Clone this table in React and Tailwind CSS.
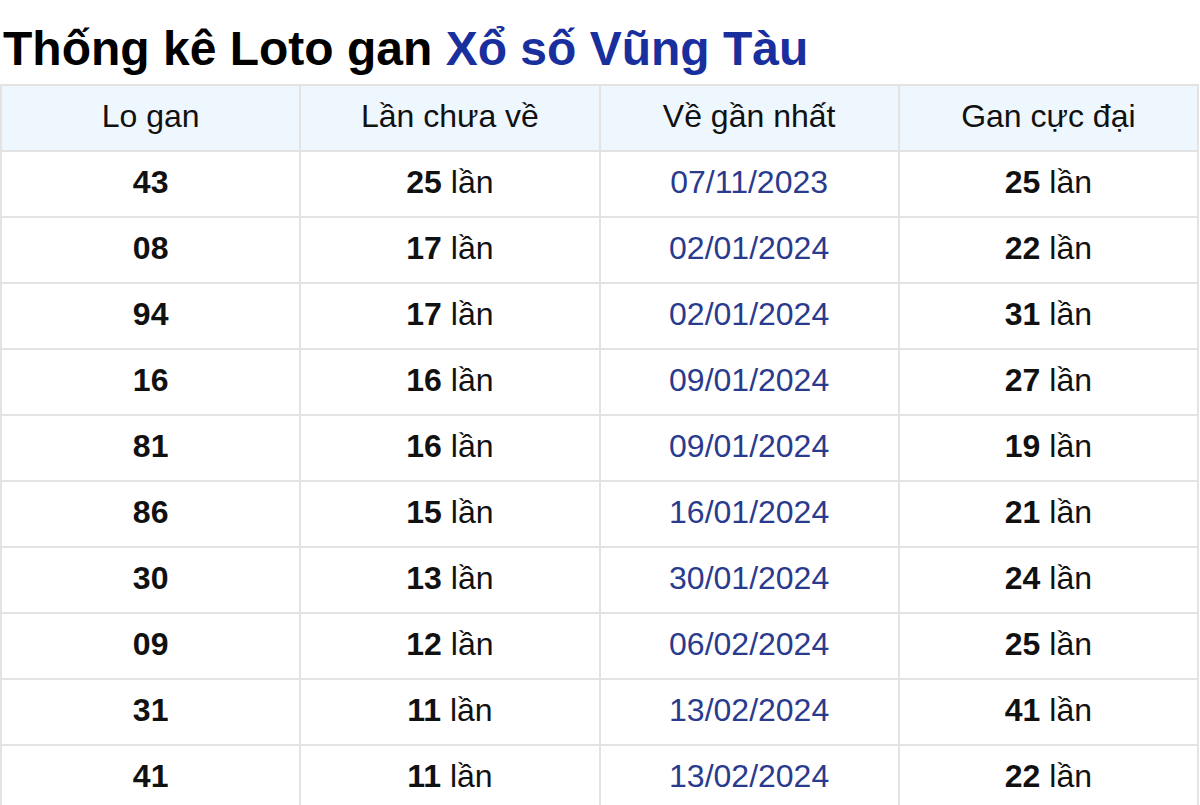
const rows = [
  ['43', '25', '07/11/2023', '25'],
  ['08', '17', '02/01/2024', '22'],
  ['94', '17', '02/01/2024', '31'],
  ['16', '16', '09/01/2024', '27'],
  ['81', '16', '09/01/2024', '19'],
  ['86', '15', '16/01/2024', '21'],
  ['30', '13', '30/01/2024', '24'],
  ['09', '12', '06/02/2024', '25'],
  ['31', '11', '13/02/2024', '41'],
  ['41', '11', '13/02/2024', '22'],
];

const headers = ['Lo gan', 'Lần chưa về', 'Về gần nhất', 'Gan cực đại'];

export default function App() {
  return (
    <div className="w-[1200px] h-[805px] overflow-hidden bg-white font-['Liberation_Sans',Arial,sans-serif] text-[#111]">
      <h1 className="h-[84px] pl-[3px] pt-[22px] text-[48px] font-bold leading-[53px] text-black">
        Thống kê Loto gan <span className="text-[#1a2f9e]">Xổ số Vũng Tàu</span>
      </h1>
      <table className="w-[1199px] table-fixed border-collapse text-[32px]">
        <thead>
          <tr className="h-[66px] bg-[#eef6fe]">
            {headers.map((h) => (
              <th key={h} className="border-2 border-[#e3e3e3] pb-[4px] font-normal text-center">
                {h}
              </th>
            ))}
          </tr>
        </thead>
        <tbody>
          {rows.map((r, i) => (
            <tr key={i} className="h-[66px]">
              <td className="border-2 border-[#e3e3e3] pb-[4px] text-center font-bold">{r[0]}</td>
              <td className="border-2 border-[#e3e3e3] pb-[4px] text-center">
                <b>{r[1]}</b> lần
              </td>
              <td className="border-2 border-[#e3e3e3] pb-[4px] text-center text-[#2a3b8e]">{r[2]}</td>
              <td className="border-2 border-[#e3e3e3] pb-[4px] text-center">
                <b>{r[3]}</b> lần
              </td>
            </tr>
          ))}
        </tbody>
      </table>
    </div>
  );
}
